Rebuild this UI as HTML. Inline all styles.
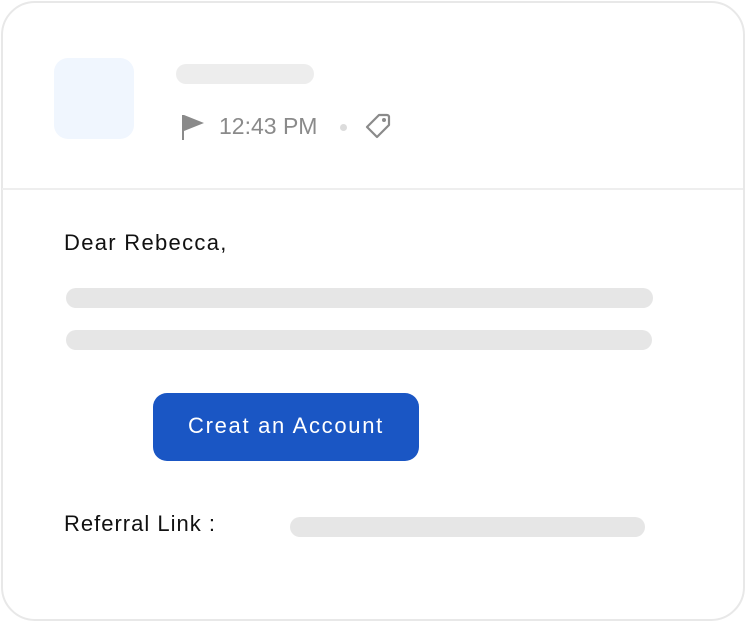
<!DOCTYPE html>
<html><head><style>
body{margin:0;width:745px;height:621px;background:#fff;font-family:"Liberation Sans",sans-serif;position:relative;overflow:hidden}
.card{position:absolute;left:1px;top:1px;width:740px;height:616px;border:2px solid #e8e8e8;border-radius:34px;background:#fff}
.a{position:absolute}
.bar{position:absolute;background:#e6e6e6;border-radius:10px}
</style></head><body>
<div class="card"></div>
<div class="a" style="left:54px;top:58px;width:80px;height:81px;background:#f0f6fe;border-radius:14px"></div>
<div class="bar" style="left:176px;top:64px;width:138px;height:20px;background:#ededed"></div>
<svg class="a" style="left:180px;top:113px" width="26" height="28" viewBox="0 0 26 28"><path d="M2 2h2v25H2z M4 2l20 8-20 8z" fill="#8a8a8a"/></svg>
<div class="a" style="left:219px;top:113px;font-size:23px;color:#8a8a8a">12:43 PM</div>
<div class="a" style="left:340px;top:124px;width:7px;height:7px;border-radius:50%;background:#dcdcdc"></div>
<svg class="a" style="left:364px;top:112px" width="28" height="28" viewBox="0 0 28 28"><path d="M15 3h8a2 2 0 0 1 2 2v8L13 25 3 15z" fill="none" stroke="#8a8a8a" stroke-width="2.2" stroke-linejoin="round"/><circle cx="20" cy="8" r="2" fill="#8a8a8a"/></svg>
<div class="a" style="left:2px;top:188px;width:741px;height:2px;background:#eeeeee"></div>
<div class="a" style="left:64px;top:230px;font-size:22px;letter-spacing:1.3px;color:#111">Dear Rebecca,</div>
<div class="bar" style="left:66px;top:288px;width:587px;height:20px"></div>
<div class="bar" style="left:66px;top:330px;width:586px;height:20px"></div>
<div class="a" style="left:153px;top:393px;width:266px;height:68px;background:#1a56c4;border-radius:14px;color:#fff;font-size:22px;letter-spacing:1.7px;text-align:center;line-height:66px">Creat an Account</div>
<div class="a" style="left:64px;top:511px;font-size:22px;letter-spacing:1px;color:#111">Referral Link :</div>
<div class="bar" style="left:290px;top:517px;width:355px;height:20px"></div>
</body></html>
